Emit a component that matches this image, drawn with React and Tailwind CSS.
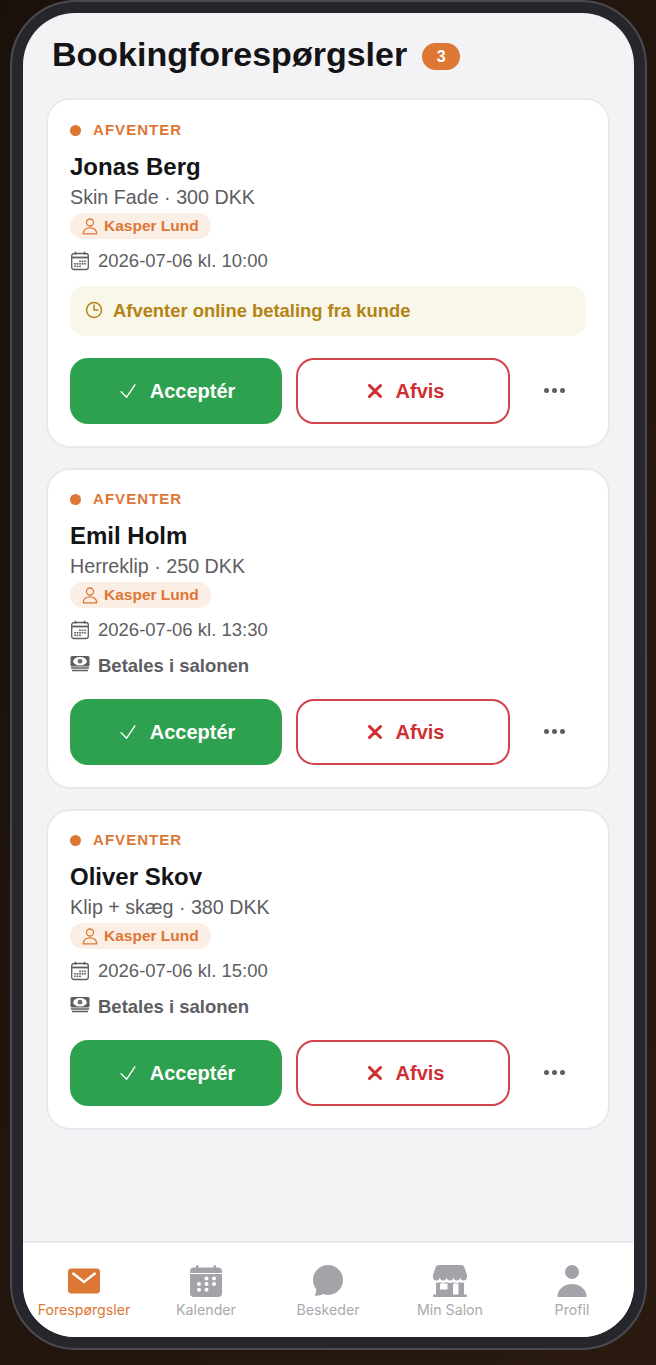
import React from "react";
import { HiOutlineClock, HiOutlineCheck, HiXMark } from "react-icons/hi2";

const sans = "font-['Liberation_Sans',Arial,sans-serif]";

const SmallUser = () => (
  <svg width="16" height="17" viewBox="0 0 16 17" fill="none" stroke="#dd7733" strokeWidth="1.3">
    <circle cx="8" cy="4.500" r="3.500" />
    <path d="M1.300 15.800c0-4 3-6 6.700-6s6.700 2 6.700 6z" strokeLinejoin="round" />
  </svg>
);

const SmallCal = () => (
  <svg width="20" height="20" viewBox="0 0 20 20" fill="none" stroke="#5d5d63" strokeWidth="1.300">
    <rect x="1.700" y="2.500" width="16.600" height="16" rx="2.300" />
    <path d="M5.500 0.800v3M14.500 0.800v3" />
    <path d="M2 6.500h16" strokeWidth="1.800" />
    <g fill="#5d5d63" stroke="none">
      {[[10,9.500],[12.500,9.500],[15,9.500],[5,12],[7.500,12],[10,12],[12.500,12],[15,12],[5,14.500],[7.500,14.500],[10,14.500]].map(([x, y], i) => (
        <rect key={i} x={x - 0.8} y={y} width="1.600" height="1.600" />
      ))}
    </g>
  </svg>
);

const SmallMoney = () => (
  <svg width="20" height="16" viewBox="0 0 20 16">
    <rect x="0.500" y="0" width="19" height="10.500" rx="1.500" fill="#5d5d63" />
    <ellipse cx="10" cy="5.200" rx="6.800" ry="4.300" fill="#fff" />
    <circle cx="10" cy="5.200" r="2.400" fill="#6f6f75" />
    <path d="M1 12h18M2 14.500h16" stroke="#5d5d63" strokeWidth="1.500" fill="none" />
  </svg>
);

function Card({ name, service, notice, time }) {
  return (
    <div className={`rounded-[24px] border-2 border-[#e9e9ed] bg-white px-[22px] pb-[22px] ${notice ? "pt-[20px]" : "pt-[19px]"}`}>
      <div className="flex h-[20px] items-center gap-[12px]">
        <span className="h-[11px] w-[11px] rounded-full bg-[#dc7735]" />
        <span className="text-[15px] leading-[20px] font-bold tracking-[1.05px] text-[#dc7735]">AFVENTER</span>
      </div>
      <div className="mt-[12px] text-[24px] leading-[30px] font-bold text-[#141416]">{name}</div>
      <div className="text-[19.7px] leading-[30px] text-[#5d5d63]">{service}</div>
      <div className="mt-[1px] flex h-[26px] w-[141px] items-center gap-[6px] rounded-full bg-[#fbeee5] pl-[12px]">
        <SmallUser />
        <span className="text-[15.5px] font-bold text-[#dc7735]">Kasper Lund</span>
      </div>
      <div className="mt-[9px] flex h-[26px] items-center gap-[8px]">
        <SmallCal />
        <span className="text-[18.5px] text-[#5d5d63]">2026-07-06 kl. {time}</span>
      </div>
      {notice ? (
        <div className="mt-[12px] flex h-[50px] items-center gap-[9px] rounded-[14px] bg-[#f9f6ea] pl-[14px]">
          <HiOutlineClock className="h-[20px] w-[20px] -translate-y-px text-[#b38412]" strokeWidth={1.8} />
          <span className="text-[18.4px] font-bold text-[#b38412]">Afventer online betaling fra kunde</span>
        </div>
      ) : (
        <div className="mt-[10px] flex h-[26px] items-center gap-[8px]">
          <span className="-translate-y-[2px]"><SmallMoney /></span>
          <span className="text-[18.5px] font-bold text-[#5d5d63]">Betales i salonen</span>
        </div>
      )}
      <div className={`${notice ? "mt-[22px]" : "mt-[20px]"} flex items-center`}>
        <button className="flex h-[66px] w-[212px] items-center justify-center gap-[11px] rounded-[18px] bg-[#2da14f] text-[20px] font-bold text-white">
          <HiOutlineCheck className="h-[22px] w-[22px]" />
          Acceptér
        </button>
        <button className="ml-[14px] flex h-[66px] w-[214px] items-center justify-center gap-[10px] rounded-[18px] border-2 border-[#d0444a] bg-white pl-[2px] text-[20px] font-bold text-[#cf2f33]">
          <HiXMark className="h-[22px] w-[22px]" strokeWidth={1.9} />
          Afvis
        </button>
        <div className="ml-[34px] flex -translate-y-[1px] items-center gap-[3px]">
          <span className="h-[5px] w-[5px] rounded-full bg-[#5d5d63]" />
          <span className="h-[5px] w-[5px] rounded-full bg-[#5d5d63]" />
          <span className="h-[5px] w-[5px] rounded-full bg-[#5d5d63]" />
        </div>
      </div>
    </div>
  );
}

const Mail = () => (
  <svg width="32" height="26" viewBox="0 0 32 26">
    <rect x="0" y="0.500" width="32" height="25" rx="3.500" fill="#dc7735" />
    <path d="M4.500 5 L16 14 L27.500 5" fill="none" stroke="#fff" strokeWidth="2.400" />
  </svg>
);
const Cal = () => (
  <svg width="32" height="32" viewBox="0 0 32 32" fill="#a3a3a9">
    <rect x="6" y="0" width="2.400" height="5" rx="1.200" />
    <rect x="23.600" y="0" width="2.400" height="5" rx="1.200" />
    <path d="M4 2.500h24a4 4 0 0 1 4 4v1.500H0V6.500a4 4 0 0 1 4-4z" />
    <path d="M0 9h32v19a4 4 0 0 1-4 4H4a4 4 0 0 1-4-4z" />
    <g fill="#fff">
      {[[16.500, 13.500], [24, 13.500], [9, 19], [16.500, 19], [24, 19], [9, 24.700], [16.500, 24.700]].map(([x, y], i) => (
        <circle key={i} cx={x} cy={y} r="2" />
      ))}
    </g>
  </svg>
);
const Chat = () => (
  <svg width="32" height="32" viewBox="0 0 32 32" fill="#a3a3a9">
    <circle cx="16" cy="15" r="15" />
    <path d="M4 22 C4.500 26 4 29 2.500 30.500 C6 31 10 30 13 28 Z" />
  </svg>
);
const Shop = () => (
  <svg width="34" height="32" viewBox="0 0 34 32" fill="#a3a3a9">
    <path d="M6 0h22c2 0 3 1 3.500 2.500L34 10v2a3.400 3.400 0 0 1-6.800 0 3.400 3.400 0 0 1-6.800 0 3.400 3.400 0 0 1-6.800 0 3.400 3.400 0 0 1-6.800 0A3.400 3.400 0 0 1 0 12v-2l2.500-7.500C3 1 4 0 6 0z" />
    <path fillRule="evenodd" d="M3 17.500c1.500.5 3 .3 4-.5 2 1.300 4.500 1.300 6.500 0 2 1.300 4.500 1.300 6.500 0 2 1.300 4.500 1.300 6.500 0 1 .8 2.500 1 4.500.5V30H3zM7 18.500v6h7.500v-6zM20 18.500V30h5.500V18.500z" />
    <rect x="0" y="29.500" width="34" height="2.500" rx="1" />
  </svg>
);
const Person = () => (
  <svg width="30" height="32" viewBox="0 0 30 32" fill="#a3a3a9">
    <circle cx="15" cy="7" r="7" />
    <path d="M0.500 32c0-2 0-4 1.500-6 2.500-4 7-7 13-7s10.500 3 13 7c1.500 2 1.500 4 1.500 6z" />
  </svg>
);

function Tab({ icon, label, active }) {
  return (
    <div className="flex flex-1 flex-col items-center">
      <div className="flex h-[32px] items-center">{icon}</div>
      <span className={`mt-[3px] font-['Inter',sans-serif] text-[14.2px] leading-[20px] ${active ? "text-[#dc7735]" : "text-[#a9a9ae]"}`}>{label}</span>
    </div>
  );
}

export default function App() {
  return (
    <div className={`h-[1365px] w-[656px] overflow-hidden bg-linear-to-br from-[#1a110b] to-[#2a1a10] pl-[10px] ${sans}`}>
      <div className="h-[1350px] w-[637px] rounded-[66px] border-2 border-[#4a4a50] bg-[#26272c] p-[11px]">
        <div className="flex h-full flex-col overflow-hidden rounded-[52px] bg-[#f3f3f6]">
          <div className="flex h-[85px] flex-none items-center gap-[15px] pl-[29px]">
            <h1 className="mb-[4px] text-[34px] leading-[40px] font-bold text-[#141416]">Bookingforespørgsler</h1>
            <span className="flex h-[27px] w-[38px] translate-y-[1px] items-center justify-center rounded-full bg-[#dc7735] text-[16px] font-bold text-white">3</span>
          </div>
          <div className="flex min-h-0 flex-1 flex-col gap-[20px] pr-[24px] pl-[23px]">
            <Card name="Jonas Berg" service="Skin Fade · 300 DKK" time="10:00" notice />
            <Card name="Emil Holm" service="Herreklip · 250 DKK" time="13:30" />
            <Card name="Oliver Skov" service="Klip + skæg · 380 DKK" time="15:00" />
          </div>
          <div className="flex h-[96px] flex-none border-t-2 border-[#e9e9ec] bg-white pt-[22px] pr-[1px]">
            <Tab icon={<Mail />} label="Forespørgsler" active />
            <Tab icon={<Cal />} label="Kalender" />
            <Tab icon={<Chat />} label="Beskeder" />
            <Tab icon={<Shop />} label="Min Salon" />
            <Tab icon={<Person />} label="Profil" />
          </div>
        </div>
      </div>
    </div>
  );
}
